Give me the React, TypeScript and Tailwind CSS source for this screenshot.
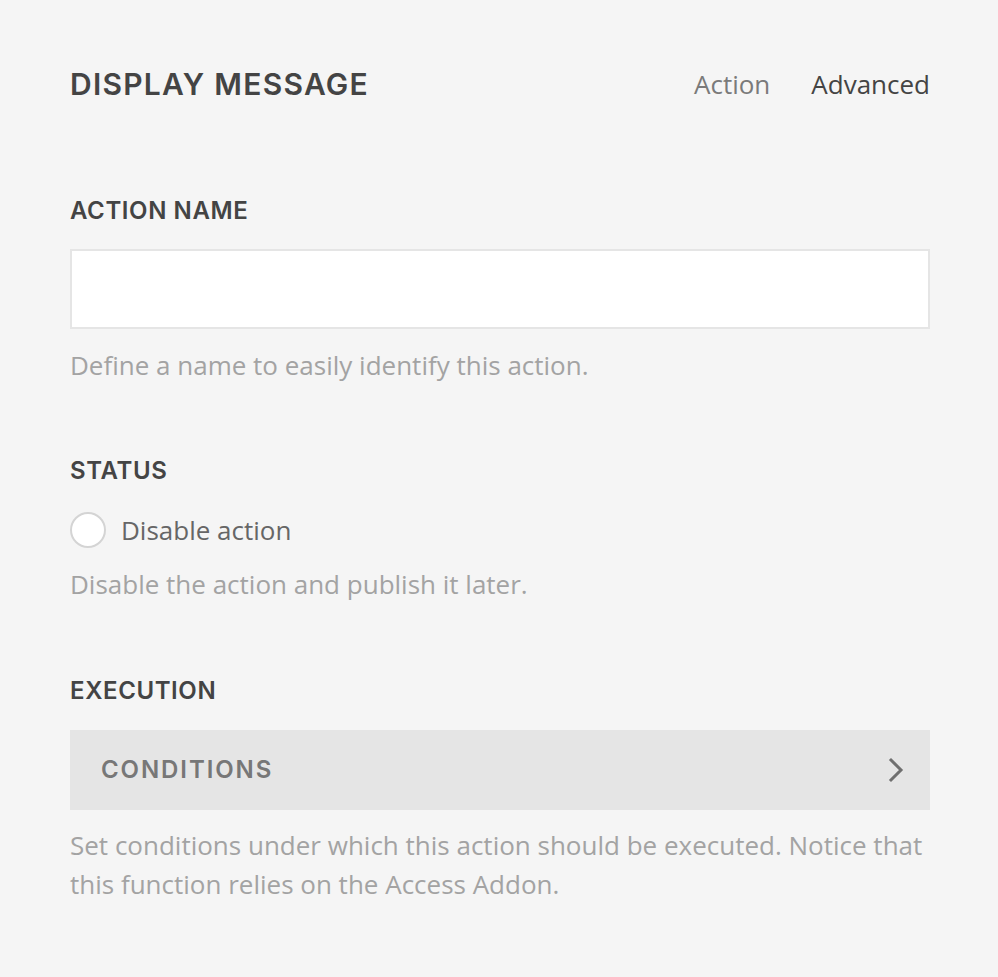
import React from "react";

const head = "font-['Inter',sans-serif] font-semibold uppercase text-[#444]";
const body = "font-['Open_Sans',sans-serif]";

export default function App() {
  return (
    <div className="min-h-[977px] w-full bg-[#f5f5f5] pl-[70px] pr-[68px] pt-[64px]">
      {/* Header */}
      <div className="flex items-center justify-between">
        <h1 className={`${head} text-[30px] leading-[40px] tracking-[0.042em]`}>Display Message</h1>
        <div className={`${body} flex items-center gap-[41px] text-[26px] leading-[40px]`}>
          <span className="text-[#7a7a7a]">Action</span>
          <span className="text-[#444]">Advanced</span>
        </div>
      </div>

      {/* Action name */}
      <div className="mt-[92px]">
        <h2 className={`${head} text-[24px] leading-[30px] tracking-[0.025em]`}>Action Name</h2>
        <input
          type="text"
          className="mt-[23px] block h-[80px] w-full border-2 border-[#e5e5e5] bg-white outline-none"
        />
        <p className={`${body} mt-[16px] text-[26px] leading-[40px] text-[#a3a3a3]`}>
          Define a name to easily identify this action.
        </p>
      </div>

      {/* Status */}
      <div className="mt-[71px]">
        <h2 className={`${head} text-[24px] leading-[30px] tracking-[0.025em]`}>Status</h2>
        <label className="mt-[26px] flex items-center gap-[15px]">
          <span className="h-[36px] w-[36px] rounded-full border-2 border-[#d4d4d4] bg-white" />
          <span className={`${body} text-[26px] leading-[36px] text-[#666]`}>Disable action</span>
        </label>
        <p className={`${body} mt-[16px] text-[26px] leading-[40px] text-[#a3a3a3]`}>
          Disable the action and publish it later.
        </p>
      </div>

      {/* Execution */}
      <div className="mt-[72px]">
        <h2 className={`${head} text-[24px] leading-[30px] tracking-[0.025em]`}>Execution</h2>
        <div className="mt-[24px] flex h-[80px] items-center justify-between bg-[#e5e5e5] pl-[31px] pr-[26px]">
          <span className={`${head} text-[24px] tracking-[0.08em] text-[#777]`}>Conditions</span>
          <svg width="16" height="26" viewBox="0 0 16 26" fill="none">
            <path d="M3 3l10 10L3 23" stroke="#6f6f6f" strokeWidth="3" strokeLinecap="square" />
          </svg>
        </div>
        <p className={`${body} mt-[16px] text-[26px] leading-[39px] text-[#a3a3a3]`}>
          Set conditions under which this action should be executed. Notice that this function relies on the Access Addon.
        </p>
      </div>
    </div>
  );
}
